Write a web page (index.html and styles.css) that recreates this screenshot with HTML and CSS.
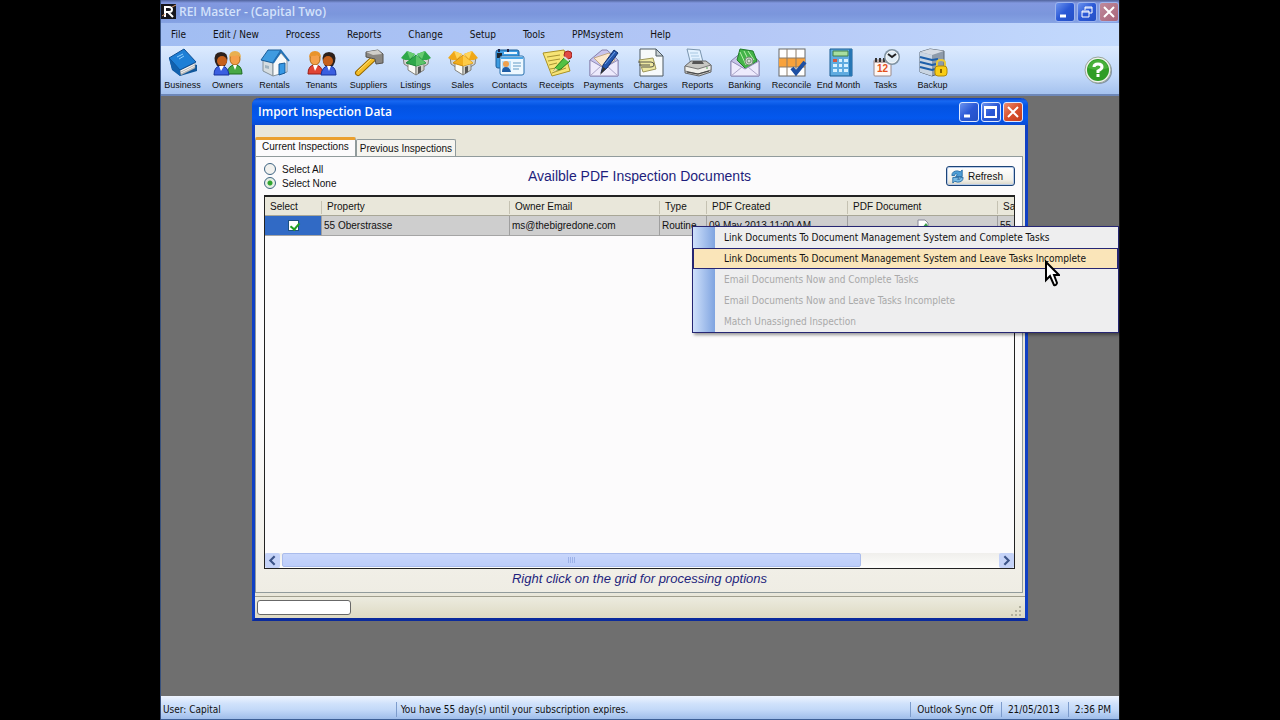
FILE: index.html
```html
<!DOCTYPE html>
<html lang="en">
<head>
    <meta charset="UTF-8">
    <meta name="viewport" content="width=device-width, initial-scale=1.0">
    <title>REI Master - (Capital Two)</title>
    <link rel="stylesheet" href="styles.css">
</head>
<body>
    <div class="app">
        <header class="app-title">
            <svg class="app-logo" viewBox="0 0 15 15">
                <rect width="15" height="15" fill="#15151c"/>
                <path d="M4 13V3H8Q11 3 11 5.500Q11 8 8 8H4M7 8L12 13" fill="none" stroke="#fff" stroke-width="2"/>
                <path d="M11 3L15 1M1 12L4 10" stroke="#e0a070"/>
            </svg>
            <h1>REI Master - (Capital Two)</h1>
            <div class="window-buttons">
                <button class="win-btn" aria-label="Minimize"><svg viewBox="0 0 18 18"><path d="M4 13H10" stroke="#fff" stroke-width="3"/></svg></button>
                <button class="win-btn" aria-label="Restore"><svg viewBox="0 0 18 18"><path d="M7 7V4H14V10H11M7 5H14M4 8H11V14H4ZM4 9H11" fill="none" stroke="#fff"/></svg></button>
                <button class="win-btn close-dim" aria-label="Close"><svg viewBox="0 0 18 18"><path d="M4 4L14 14M14 4L4 14" stroke="#fff" stroke-width="2"/></svg></button>
            </div>
        </header>

        <nav class="menu-bar">
            <button>File</button>
            <button>Edit / New</button>
            <button>Process</button>
            <button>Reports</button>
            <button>Change</button>
            <button>Setup</button>
            <button>Tools</button>
            <button>PPMsystem</button>
            <button>Help</button>
        </nav>

        <div class="toolbar">
            <div class="tools">
                <button class="tool">
                    <svg viewBox="0 0 30 30">
                        <path d="M1 10L4 22L12 28L29 23V17Z" fill="#10579b"/>
                        <path d="M12 22L27 15V20L13 27Z" fill="#f4f4f4" stroke="#888" stroke-width=".5"/>
                        <path d="M13 24L27 17M13 26L27 19" stroke="#999" stroke-width=".7"/>
                        <path d="M1 10L16 1L28 14L12 22Z" fill="#1d7fd6" stroke="#0d4e93"/>
                        <path d="M1 10L12 22V28L4 21Z" fill="#1161ae"/>
                        <path d="M9 9L15 6M11 11L16 8" stroke="#8fd0ff"/>
                    </svg>
                    <span>Business</span>
                </button>
                <button class="tool">
                    <svg viewBox="0 0 30 30">
                        <path d="M14 26Q15 17 22 17Q29 17 29 26Z" fill="#49a845" stroke="#1f6d20"/>
                        <path d="M1 27Q1 18 8 18Q15 18 16 27Z" fill="#3b5fe0" stroke="#16329c"/>
                        <ellipse cx="22" cy="11" rx="5" ry="6" fill="#f5a04a" stroke="#b06a14"/>
                        <path d="M16 10Q16 3 22 3Q28 3 28 10Q25 6 22 8Q18 7 16 10Z" fill="#e8b050"/>
                        <path d="M2 14Q0 4 8 4Q16 4 14 14L12 18H4Z" fill="#2c211d"/>
                        <ellipse cx="9" cy="13" rx="5" ry="5" fill="#c5601c"/>
                        <path d="M6 18L8 23L11 18M20 17L22 22L24 17" fill="#fff"/>
                    </svg>
                    <span>Owners</span>
                </button>
                <button class="tool">
                    <svg viewBox="0 0 30 30">
                        <path d="M3 12L13 14V28L3 23Z" fill="#d6dde1" stroke="#84919a"/>
                        <path d="M13 14L21 5L27 12V24L13 28Z" fill="#f7f9fa" stroke="#84919a"/>
                        <path d="M1 12L8 2L21 2L13 15Z" fill="#3f9be0" stroke="#1b5d98"/>
                        <path d="M13 15L21 3L29 13" fill="none" stroke="#2170b5" stroke-width="2"/>
                        <path d="M19 16L25 15V25L19 27Z" fill="#3698e5" stroke="#155b9a"/>
                        <path d="M5 17L9 18V21L5 20Z" fill="#9fb3c0"/>
                    </svg>
                    <span>Rentals</span>
                </button>
                <button class="tool">
                    <svg viewBox="0 0 30 30">
                        <path d="M1 26Q1 17 8 17Q15 17 16 26Z" fill="#e04434" stroke="#9b1c14"/>
                        <path d="M14 27Q15 18 22 18Q29 18 29 27Z" fill="#3b5fe0" stroke="#16329c"/>
                        <ellipse cx="8" cy="11" rx="5" ry="6" fill="#f5a04a" stroke="#b06a14"/>
                        <path d="M2 10Q2 3 8 3Q14 3 14 10Q11 6 8 8Q4 7 2 10Z" fill="#e8942c"/>
                        <path d="M16 14Q14 4 22 4Q30 4 28 14L26 18H18Z" fill="#2c211d"/>
                        <ellipse cx="21" cy="13" rx="5" ry="5" fill="#c5601c"/>
                        <path d="M6 17L8 23L11 17M20 18L22 23L24 18" fill="#fff"/>
                    </svg>
                    <span>Tenants</span>
                </button>
                <button class="tool">
                    <svg viewBox="0 0 30 30">
                        <path d="M4 25L19 11" stroke="#946700" stroke-width="6" stroke-linecap="round"/>
                        <path d="M4 25L19 11" stroke="#f3bd28" stroke-width="4" stroke-linecap="round"/>
                        <path d="M4 23L18 10" stroke="#ffe58b"/>
                        <path d="M12 4L24 2L29 6V15L22 16L21 11L12 9Z" fill="#8a8782" stroke="#55524e"/>
                        <path d="M12 4L24 2L28 6L19 7Z" fill="#d0cec9"/>
                    </svg>
                    <span>Suppliers</span>
                </button>
                <button class="tool">
                    <svg viewBox="0 0 30 30">
                        <path d="M2 9L9 10V20L3 16ZM28 9L21 10V20L27 16Z" fill="#d4d4cf" stroke="#83837e"/>
                        <path d="M7 15L15 17V27L7 22Z" fill="#fafaf6" stroke="#83837e"/>
                        <path d="M15 17L23 15V22L15 27Z" fill="#d0d0ca" stroke="#83837e"/>
                        <path d="M0 10L6 3L14 6L10 12L4 12Z" fill="#2fa84a"/>
                        <path d="M6 3L14 6L9 11Z" fill="#66cc70"/>
                        <path d="M30 10L24 3L16 6L20 12L26 12Z" fill="#2fa84a"/>
                        <path d="M24 3L16 6L21 11Z" fill="#66cc70"/>
                        <path d="M5 15L15 7L25 15L15 18Z" fill="#2fa84a" stroke="#1f8a3a"/>
                        <path d="M15 7L25 15L15 18Z" fill="#5cc468"/>
                        <path d="M17 19L20 18V24L17 26Z" fill="#555"/>
                    </svg>
                    <span>Listings</span>
                </button>
                <button class="tool">
                    <svg viewBox="0 0 30 30">
                        <path d="M2 9L9 10V20L3 16ZM28 9L21 10V20L27 16Z" fill="#d4d4cf" stroke="#83837e"/>
                        <path d="M7 15L15 17V27L7 22Z" fill="#fafaf6" stroke="#83837e"/>
                        <path d="M15 17L23 15V22L15 27Z" fill="#d0d0ca" stroke="#83837e"/>
                        <path d="M0 10L6 3L14 6L10 12L4 12Z" fill="#f0a818"/>
                        <path d="M6 3L14 6L9 11Z" fill="#ffd45a"/>
                        <path d="M30 10L24 3L16 6L20 12L26 12Z" fill="#f0a818"/>
                        <path d="M24 3L16 6L21 11Z" fill="#ffd45a"/>
                        <path d="M5 15L15 7L25 15L15 18Z" fill="#f3ae1c" stroke="#cf8f10"/>
                        <path d="M15 7L25 15L15 18Z" fill="#ffcb47"/>
                        <path d="M17 19L20 18V24L17 26Z" fill="#555"/>
                    </svg>
                    <span>Sales</span>
                </button>
                <button class="tool">
                    <svg viewBox="0 0 30 30">
                        <rect x="1" y="2" width="23" height="18" rx="2" fill="#3c9be0" stroke="#1d5c98"/>
                        <path d="M2 5H7V10H2Z" fill="#1b2530"/>
                        <path d="M9 5H22" stroke="#e9f6ff" stroke-width="2"/>
                        <path d="M4 1V4M13 1V4" stroke="#224" stroke-width="2"/>
                        <rect x="5" y="8" width="24" height="19" rx="2" fill="#eef8ff" stroke="#2870ad"/>
                        <path d="M6 9H28V11H6Z" fill="#4ba7e8"/>
                        <rect x="7" y="13" width="9" height="11" fill="#b9def7"/>
                        <circle cx="11" cy="16" r="3" fill="#efa04c"/>
                        <path d="M7 24Q7 19 11 19Q15 19 16 24Z" fill="#1f5da5"/>
                        <path d="M18 15H26M18 18H26M18 21H24" stroke="#629bc4"/>
                    </svg>
                    <span>Contacts</span>
                </button>
                <button class="tool">
                    <svg viewBox="0 0 30 30">
                        <path d="M1 5L22 2L28 23L10 28Z" fill="#f7e475" stroke="#aa9226"/>
                        <path d="M5 9L18 7M6 13L18 11M7 17L15 15M8 21L14 20M10 25L24 20" stroke="#a89433"/>
                        <path d="M13 20L23 9L28 13L19 21L12 23Z" fill="#53c243" stroke="#267a20"/>
                        <circle cx="26" cy="7" r="4" fill="#e04b43" stroke="#a12620"/>
                        <path d="M22 9L27 13" stroke="#ddd" stroke-width="2"/>
                        <path d="M11 24L13 20L16 22Z" fill="#f5d9a0"/>
                    </svg>
                    <span>Receipts</span>
                </button>
                <button class="tool">
                    <svg viewBox="0 0 30 30">
                        <path d="M1 12L13 2H18L29 12V28H1Z" fill="#c9c5ed" stroke="#8580ac"/>
                        <path d="M5 10L20 5L26 12L16 21Z" fill="#fbe8cd" stroke="#c0a788"/>
                        <path d="M1 12L15 20L29 12V28H1Z" fill="#edeafc" stroke="#918cb6"/>
                        <path d="M1 28L12 18M29 28L18 18" stroke="#aaa5c8"/>
                        <path d="M12 25L14 17L25 2L29 5L18 20Z" fill="#2456ad" stroke="#102f6d"/>
                        <path d="M16 16L26 4" stroke="#76a7eb"/>
                        <path d="M11 27L14 19L17 21Z" fill="#333"/>
                    </svg>
                    <span>Payments</span>
                </button>
                <button class="tool">
                    <svg viewBox="0 0 30 30">
                        <path d="M4 1H20L27 8V28H4Z" fill="#f7fafb" stroke="#4c5960"/>
                        <path d="M20 1V8H27Z" fill="#c8d1d5" stroke="#4c5960"/>
                        <path d="M3 12L17 10L20 21L7 24Z" fill="#eee8a1" stroke="#9d965b"/>
                        <path d="M2 14H15Q18 14 18 17Q18 19 15 19H6M3 17H14" fill="none" stroke="#55554b"/>
                    </svg>
                    <span>Charges</span>
                </button>
                <button class="tool">
                    <svg viewBox="0 0 30 30">
                        <path d="M4 1L17 2L20 14L8 17Z" fill="#e2f1ff" stroke="#7a95ae"/>
                        <path d="M7 5L15 5M8 8L16 8M9 11L17 11" stroke="#a8c7e1"/>
                        <path d="M2 18L8 13H23L28 17V24L16 28L2 25Z" fill="#c7c7c3" stroke="#666"/>
                        <path d="M9 16H21L19 13H10Z" fill="#555"/>
                        <path d="M2 18L15 21L28 17V22L15 26L2 23Z" fill="#efefeb" stroke="#777"/>
                        <path d="M4 24L15 26L26 23" fill="none" stroke="#444"/>
                        <circle cx="24" cy="20" r="1" fill="#8b8"/>
                    </svg>
                    <span>Reports</span>
                </button>
                <button class="tool">
                    <svg viewBox="0 0 30 30">
                        <path d="M1 13L12 4H19L29 13V28H1Z" fill="#c8c4e8" stroke="#8480aa"/>
                        <path d="M7 12L10 1L23 3L27 13L16 21Z" fill="#43b348" stroke="#207a2a"/>
                        <path d="M10 4L16 17M14 3L20 15M18 3L24 12" stroke="#baf0ac"/>
                        <path d="M1 13L15 21L29 13V28H1Z" fill="#edeafc" stroke="#918cb6"/>
                        <path d="M1 28L12 19M29 28L18 19" stroke="#aaa5c8"/>
                        <circle cx="19" cy="13" r="4" fill="#d4ddd3" stroke="#748c75"/>
                        <circle cx="19" cy="13" r="2" fill="none" stroke="#748c75"/>
                    </svg>
                    <span>Banking</span>
                </button>
                <button class="tool">
                    <svg viewBox="0 0 30 30">
                        <rect x="2" y="1" width="26" height="27" fill="#fff" stroke="#666"/>
                        <path d="M2 10H28V19H2Z" fill="#f8a23b"/>
                        <path d="M10 1V28M19 1V28M2 10H28M2 19H28" stroke="#8a7a68"/>
                        <path d="M15 20L19 25L28 14" fill="none" stroke="#1d4fa3" stroke-width="4"/>
                    </svg>
                    <span>Reconcile</span>
                </button>
                <button class="tool">
                    <svg viewBox="0 0 30 30">
                        <path d="M6 1H28V28H6Z" fill="#5fabe0" stroke="#175b91"/>
                        <path d="M25 1H28V28H25Z" fill="#2676b4"/>
                        <path d="M9 3H24V8H9Z" fill="#a8dfa0" stroke="#42804a"/>
                        <path d="M9 11H13V14H9Z" fill="#d35843"/>
                        <path d="M15 11H18V14H15ZM20 11H24V14H20ZM9 16H13V19H9ZM15 16H18V19H15ZM20 16H24V19H20ZM9 21H13V24H9ZM15 21H18V24H15ZM20 21H24V24H20Z" fill="#d7f0ff"/>
                    </svg>
                    <span>End Month</span>
                </button>
                <button class="tool">
                    <svg viewBox="0 0 30 30">
                        <rect x="3" y="12" width="17" height="16" rx="1" fill="#fff7f5" stroke="#988"/>
                        <path d="M3 12H20V15H3Z" fill="#b9a8a8"/>
                        <path d="M5 10V14M9 10V14M13 10V14" stroke="#333" stroke-width="2"/>
                        <text x="6" y="24" font-family="Liberation Sans" font-size="10" font-weight="bold" fill="#e3501c">12</text>
                        <circle cx="21" cy="9" r="8" fill="#7f93a2"/>
                        <circle cx="21" cy="9" r="6" fill="#e0edf6" stroke="#fff"/>
                        <path d="M17 6L21 9L25 6" fill="none" stroke="#222" stroke-width="2"/>
                    </svg>
                    <span>Tasks</span>
                </button>
                <button class="tool">
                    <svg viewBox="0 0 30 30">
                        <path d="M2 4L12 1L26 3V24L14 28L2 24Z" fill="#8e9baa" stroke="#5b6673"/>
                        <path d="M2 4L12 1L26 3L14 7Z" fill="#d5dbe3"/>
                        <path d="M2 4L14 7V28L2 24Z" fill="#c9d5e3"/>
                        <path d="M2 9L14 12L20 11M2 14L14 17L18 16M2 19L14 22L17 21" fill="none" stroke="#1d5faa" stroke-width="2"/>
                        <path d="M19 19V15Q19 12 23 12Q27 12 27 15V19" fill="none" stroke="#e8c83a" stroke-width="2"/>
                        <rect x="17" y="18" width="12" height="10" rx="3" fill="#f9cd16" stroke="#b18907"/>
                        <path d="M23 21V25" stroke="#8b6800" stroke-width="2"/>
                    </svg>
                    <span>Backup</span>
                </button>
            </div>
            <button class="help" aria-label="Help">
                <svg viewBox="0 0 28 28">
                    <circle cx="15" cy="15" r="13" fill="#8191a5"/>
                    <circle cx="14" cy="14" r="13" fill="#edf1ec" stroke="#9aa69a"/>
                    <circle cx="14" cy="14" r="11" fill="#2f9d25"/>
                    <path d="M4 12Q6 4 14 4Q22 4 24 12Q14 16 4 12Z" fill="#48b03a"/>
                    <path d="M10 11Q10 8 14 8Q18 8 18 11Q18 13 14 15V17" fill="none" stroke="#fff" stroke-width="3"/>
                    <path d="M14 18V21" stroke="#fff" stroke-width="3"/>
                </svg>
            </button>
        </div>

        <main class="workspace">
            <section class="window">
                <header class="window-title">
                    <h2>Import Inspection Data</h2>
                    <div class="window-buttons">
                        <button class="win-btn" aria-label="Minimize"><svg viewBox="0 0 18 18"><path d="M4 13H10" stroke="#fff" stroke-width="3"/></svg></button>
                        <button class="win-btn" aria-label="Maximize"><svg viewBox="0 0 18 18"><path d="M3 4H14V14H3ZM3 5H14" fill="none" stroke="#fff" stroke-width="2"/></svg></button>
                        <button class="win-btn close" aria-label="Close"><svg viewBox="0 0 18 18"><path d="M4 4L14 14M14 4L4 14" stroke="#fff" stroke-width="2"/></svg></button>
                    </div>
                </header>

                <div class="window-body">
                    <div class="tabs">
                        <button class="tab active">Current Inspections</button>
                        <button class="tab">Previous Inspections</button>
                    </div>

                    <div class="panel">
                        <div class="panel-head">
                            <div class="choices">
                                <label><input type="radio" name="select"> Select All</label>
                                <label><input type="radio" name="select" checked> Select None</label>
                            </div>
                            <h3>Availble PDF Inspection Documents</h3>
                            <button class="refresh">
                                <svg viewBox="0 0 16 16">
                                    <path d="M2 7Q2 2 8 2L11 3L13 1V8H6L8 6Q5 4 5 7Z" fill="#4d9ed6" stroke="#2b6fa6"/>
                                    <path d="M14 9Q14 14 8 14L5 13L3 15V9H10L8 11Q11 12 11 9Z" fill="#78bbe6" stroke="#2b6fa6"/>
                                </svg>
                                Refresh
                            </button>
                        </div>

                        <div class="grid">
                            <div class="grid-view">
                                <table>
                                    <colgroup>
                                        <col class="col-select">
                                        <col class="col-property">
                                        <col class="col-email">
                                        <col class="col-type">
                                        <col class="col-created">
                                        <col class="col-document">
                                        <col class="col-last">
                                    </colgroup>
                                    <thead>
                                        <tr>
                                            <th>Select</th>
                                            <th>Property</th>
                                            <th>Owner Email</th>
                                            <th>Type</th>
                                            <th>PDF Created</th>
                                            <th>PDF Document</th>
                                            <th>Sa</th>
                                        </tr>
                                    </thead>
                                    <tbody>
                                        <tr>
                                            <td class="selected"><input type="checkbox" aria-label="Select 55 Oberstrasse" checked></td>
                                            <td>55 Oberstrasse</td>
                                            <td>ms@thebigredone.com</td>
                                            <td>Routine</td>
                                            <td>09 May 2013 11:00 AM</td>
                                            <td class="doc">
                                                <svg viewBox="0 0 12 14"><path d="M1 1H8L11 4V13H1Z" fill="#fff" stroke="#889"/><path d="M5 9L9 4L11 7V12H6Z" fill="#3ba04a"/></svg>
                                            </td>
                                            <td>55</td>
                                        </tr>
                                    </tbody>
                                </table>
                            </div>
                            <div class="scrollbar">
                                <button class="arrow" aria-label="Scroll left"><svg viewBox="0 0 14 14"><path d="M9 3L5 7L9 11" fill="none" stroke="#3c5488" stroke-width="2"/></svg></button>
                                <div class="track"><div class="thumb"><i></i><i></i><i></i><i></i></div></div>
                                <button class="arrow" aria-label="Scroll right"><svg viewBox="0 0 14 14"><path d="M5 3L9 7L5 11" fill="none" stroke="#3c5488" stroke-width="2"/></svg></button>
                            </div>
                        </div>

                        <p class="hint">Right click on the grid for processing options</p>
                    </div>
                </div>

                <footer class="window-status">
                    <div class="progress"></div>
                    <svg class="grip" viewBox="0 0 12 12"><path d="M8 0H10V2H8ZM4 4H6V6H4ZM8 4H10V6H8ZM0 8H2V10H0ZM4 8H6V10H4ZM8 8H10V10H8Z" fill="#b3b19f"/></svg>
                </footer>
            </section>
        </main>

        <footer class="app-status">
            <span class="user">User: Capital</span>
            <span class="notice">You have 55 day(s) until your subscription expires.</span>
            <span>Outlook Sync Off</span>
            <span>21/05/2013</span>
            <span>2:36 PM</span>
        </footer>

        <div class="context-menu" role="menu">
            <button role="menuitem">Link Documents To Document Management System and Complete Tasks</button>
            <button role="menuitem" class="hover">Link Documents To Document Management System and Leave Tasks Incomplete</button>
            <button role="menuitem" disabled>Email Documents Now and Complete Tasks</button>
            <button role="menuitem" disabled>Email Documents Now and Leave Tasks Incomplete</button>
            <button role="menuitem" disabled>Match Unassigned Inspection</button>
            <svg class="pointer" viewBox="0 0 16 28"><path d="M2 2V20L6 16L10 25Q12 26 13 23L10 15H15Z" fill="#fff" stroke="#000" stroke-width="2"/></svg>
        </div>
    </div>
</body>
</html>
```
FILE: styles.css
```css
* {
    box-sizing: border-box;
}

body {
    margin: 0;
    background-color: #000;
    color: #111;
    font-family: "Liberation Sans", Arial, sans-serif;
    font-size: 10px;
}

button {
    margin: 0;
    padding: 0;
    border: none;
    background: none;
    color: inherit;
    font: inherit;
}

svg {
    display: block;
}

h1, h2, h3, p {
    margin: 0;
}

.app {
    position: relative;
    display: flex;
    flex-direction: column;
    width: 75%;
    min-height: 100vh;
    margin: 0 auto;
    border-left: 1px solid #37507c;
    border-right: 1px solid #1c1c1c;
    background-color: #6f6f6f;
}

/* Main window title, menu and toolbar */

.app-title {
    display: flex;
    align-items: center;
    gap: 3px;
    height: 23px;
    background: linear-gradient(#50639c, #8298e0 3px, #7b96dc 14px, #86a3e4);
}

.app-logo {
    width: 15px;
    height: 17px;
}

h1, h2 {
    flex: 1;
    font-family: "Open Sans", sans-serif;
    font-size: 12px;
    font-weight: 600;
    line-height: 16px;
}

h1 {
    color: #d3e2fb;
}

h2 {
    color: #fff;
}

.window-buttons {
    display: flex;
    gap: 2px;
}

.win-btn {
    width: 20px;
    height: 20px;
    border: 1px solid #dde8ff;
    border-radius: 3px;
    background: linear-gradient(135deg, #6c93ee, #2a58d6 50%, #2450c4);
}

.win-btn.close {
    background: linear-gradient(135deg, #ec8e70, #d9502c 50%, #c33d1c);
}

.win-btn.close-dim {
    background: linear-gradient(135deg, #bf8a9c, #a9657a);
}

.app-title .win-btn {
    border-color: #9db4ee;
}

.menu-bar {
    display: flex;
    gap: 27px;
    height: 23px;
    padding-left: 10px;
    background: linear-gradient(90deg, #a1bdf2, #b4c7f6 60%, #c3dafd);
    font-family: "DejaVu Sans Condensed", Tahoma, sans-serif;
}

.toolbar {
    display: flex;
    align-items: center;
    justify-content: space-between;
    height: 50px;
    padding-right: 7px;
    border-bottom: 2px solid #6d87b8;
    background: linear-gradient(#dceafe, #c9defb 40%, #c4dafa 60%, #a5c2ee);
}

.tools {
    display: grid;
    grid-template-columns: 43px repeat(16, 47px);
}

.tool {
    display: flex;
    flex-direction: column;
    align-items: center;
    line-height: 14px;
    white-space: nowrap;
}

.tool svg {
    width: 30px;
    height: 30px;
}

.tool span {
    font-size: 9px;
}

.help svg {
    width: 28px;
    height: 28px;
}

/* Import window */

.workspace {
    flex: 1;
    display: flex;
    justify-content: center;
    padding: 2px 0 75px;
}

.window {
    display: flex;
    flex-direction: column;
    width: 81%;
    border: 3px solid #1040c4;
    border-top: none;
    border-bottom-color: #0a2a9c;
    border-radius: 7px 7px 0 0;
    background-color: #ece9d8;
}

.window-title {
    display: flex;
    align-items: center;
    height: 27px;
    margin: 0 -3px;
    padding: 0 5px 0 6px;
    border-radius: 7px 7px 0 0;
    background: linear-gradient(#0a3fc4, #1768f2 3px, #0353e2 8px, #0458ee 20px, #0b4cd4);
}

.window-body {
    flex: 1;
    display: flex;
    flex-direction: column;
    padding: 12px 2px 3px 0;
    background-color: #e9e7da;
}

.tabs {
    display: flex;
    align-items: flex-end;
}

.tab {
    height: 17px;
    padding: 0 3px;
    border: 1px solid #919b9c;
    border-bottom: none;
    border-radius: 2px 2px 0 0;
    background-color: #f6f5f0;
}

.tab.active {
    height: 20px;
    margin-bottom: -1px;
    padding: 0 6px 5px;
    border-top: 3px solid #eaa02f;
    background-color: #fcfbfc;
}

.panel {
    flex: 1;
    display: flex;
    flex-direction: column;
    padding: 2px 7px 3px 8px;
    border: 1px solid #919b9c;
    background: linear-gradient(#fcfbfc 60%, #efede4);
}

.panel-head {
    display: grid;
    grid-template-columns: 1fr auto 1fr;
    align-items: center;
    height: 34px;
    margin-bottom: 2px;
}

.choices label {
    display: flex;
    align-items: center;
    gap: 6px;
    height: 14px;
}

.choices input {
    appearance: none;
    width: 12px;
    height: 12px;
    margin: 0;
    border: 1px solid #3e6482;
    border-radius: 50%;
    background-color: #f1f1ee;
}

.choices input:checked {
    background: radial-gradient(#2fa52f 0 2px, #e6f0e4 3px);
}

h3 {
    color: #1e1e7c;
    font-size: 14px;
    font-weight: normal;
}

.refresh {
    display: flex;
    align-items: center;
    justify-self: end;
    gap: 3px;
    height: 20px;
    padding: 0 11px 0 3px;
    border: 1px solid #1c4478;
    border-radius: 3px;
    background: linear-gradient(#fff, #f2f1ea 70%, #d9d5c6);
    box-shadow: inset 0 0 0 1px #b9cbe8;
}

.refresh svg {
    width: 15px;
    height: 15px;
}

.grid {
    flex: 1;
    display: flex;
    flex-direction: column;
    border: 1px solid #222;
    border-top-width: 2px;
    background-color: #fcfbfc;
}

.grid-view {
    flex: 1;
    width: 0;
    min-width: 100%;
    overflow: hidden;
}

table {
    width: 927px;
    table-layout: fixed;
    border-collapse: separate;
    border-spacing: 0;
}

.col-select { width: 57px; }
.col-property { width: 188px; }
.col-email { width: 150px; }
.col-type { width: 47px; }
.col-created { width: 141px; }
.col-document { width: 150px; }

th {
    height: 19px;
    padding: 0 5px;
    border-bottom: 1px solid #a9a797;
    background: linear-gradient(90deg, #e9e7da calc(100% - 1px), #c5c2b2 0) 0 4px / 100% 13px no-repeat #e9e7da;
    font-weight: normal;
    text-align: left;
}

td {
    height: 20px;
    padding: 0 2px;
    border-right: 1px solid #9f9f9f;
    border-bottom: 1px solid #a5a5a5;
    background-color: #cecece;
    overflow: hidden;
    white-space: nowrap;
}

td.selected {
    background-color: #316ac5;
    text-align: center;
}

td input {
    appearance: none;
    display: block;
    width: 11px;
    height: 11px;
    margin: 0 auto;
    border: 1px solid #1c5180;
    background-color: #fff;
}

td input:checked::after {
    content: "";
    display: block;
    width: 4px;
    height: 7px;
    margin: 0 3px;
    border: solid #21a121;
    border-width: 0 2px 2px 0;
    transform: rotate(40deg);
}

.doc svg {
    width: 12px;
    height: 14px;
    margin: 0 auto;
}

.scrollbar {
    display: flex;
    height: 15px;
    background: linear-gradient(#f0efec, #fdfdfb);
}

.arrow {
    width: 15px;
    border-radius: 2px;
    background-color: #c5d3f8;
}

.track {
    flex: 1;
    padding: 0 2px;
}

.thumb {
    display: flex;
    align-items: center;
    justify-content: center;
    gap: 1px;
    width: 81%;
    height: 14px;
    border: 1px solid #aabcec;
    border-radius: 2px;
    background: linear-gradient(#c8d6fb, #bccdfa);
}

.thumb i {
    width: 1px;
    height: 6px;
    background-color: #9db2e8;
}

.hint {
    height: 20px;
    color: #1e1e7c;
    font-size: 13px;
    font-style: italic;
    line-height: 20px;
    text-align: center;
}

.window-status {
    display: flex;
    align-items: center;
    justify-content: space-between;
    height: 22px;
    padding: 0 2px;
    border-top: 1px solid #a19f8e;
    background: linear-gradient(#ecebdf, #dedac3);
}

.progress {
    width: 94px;
    height: 15px;
    border: 1px solid #686868;
    border-radius: 3px;
    background-color: #fff;
}

.grip {
    align-self: flex-end;
    width: 12px;
    height: 12px;
}

/* Main window status bar */

.app-status {
    display: flex;
    align-items: center;
    height: 24px;
    padding-top: 3px;
    border-bottom: 1px solid #3d5f96;
    background: linear-gradient(#eef4fe, #cfe1fb 8px, #c2d8f8 14px, #9fbdea);
    font-family: "DejaVu Sans Condensed", Tahoma, sans-serif;
}

.app-status span {
    padding: 0 8px 0 6px;
    border-left: 1px solid #7d9ccc;
    line-height: 15px;
}

.app-status .user {
    width: 24.5%;
    padding-left: 2px;
    border-left: none;
}

.app-status .notice {
    flex: 1;
    padding-left: 4px;
}

/* Grid context menu */

.context-menu {
    position: absolute;
    top: 226px;
    right: 0;
    display: flex;
    flex-direction: column;
    width: 427px;
    border: 1px solid #262673;
    background: linear-gradient(90deg, #cfe0fb, #7fa4e0 22px, #eeeeef 22px);
    box-shadow: 2px 2px 3px rgba(0, 0, 0, 0.4);
    font-family: "DejaVu Sans Condensed", Tahoma, sans-serif;
}

.context-menu button {
    height: 21px;
    padding-left: 30px;
    border: 1px solid transparent;
    text-align: left;
}

.context-menu .hover {
    border-color: #262673;
    background-color: #fae5b9;
}

.context-menu button:disabled {
    color: #a9a9a9;
}

.pointer {
    position: absolute;
    top: 33px;
    left: 351px;
    width: 16px;
    height: 28px;
}
```
